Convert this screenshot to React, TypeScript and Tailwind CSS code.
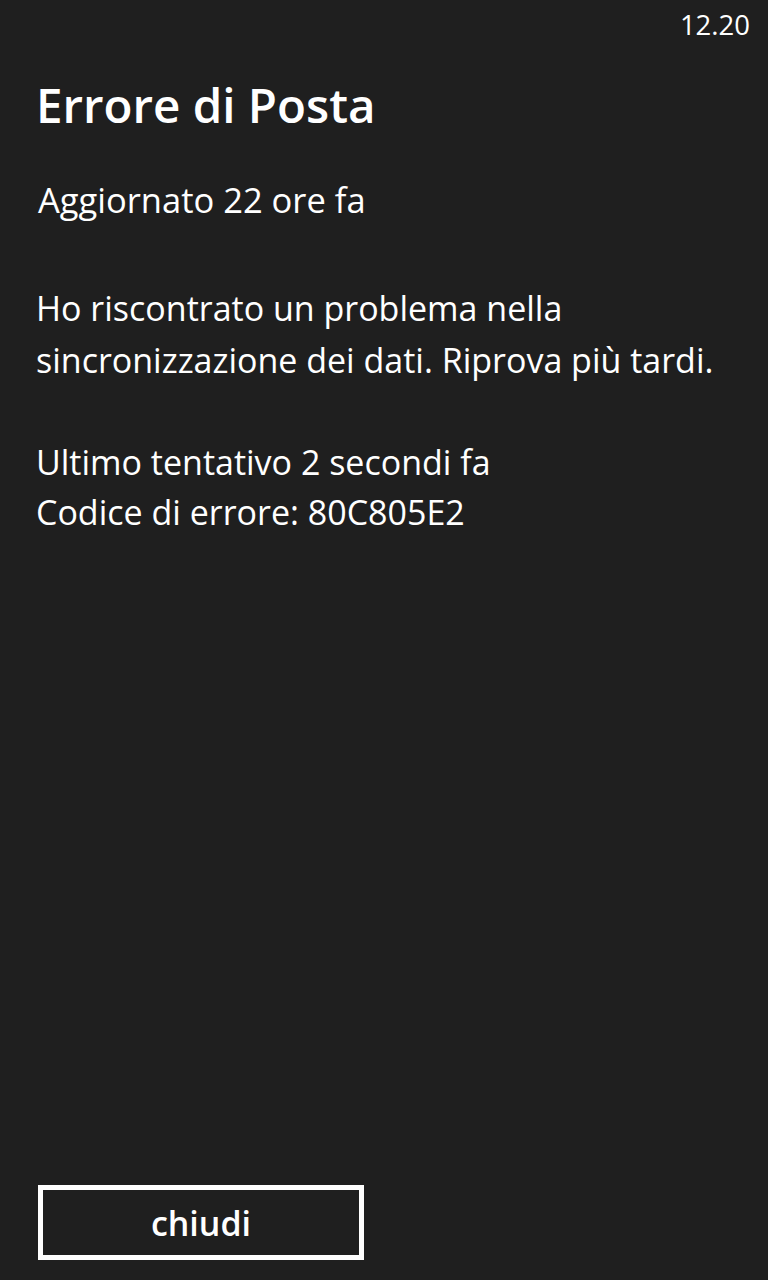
export default function App() {
  return (
    <div className="relative flex h-[1280px] w-[768px] flex-col bg-[#1f1f1f] text-white" style={{ fontFamily: '"Open Sans", "Noto Sans", sans-serif' }}>
      <div className="flex h-[50px] items-center justify-end pr-[18px]">
        <span className="text-[27.5px] leading-none">12.20</span>
      </div>
      <div className="flex flex-1 flex-col pl-[36px] pr-4">
        <h1 className="mt-[25px] text-[47.5px] font-semibold leading-[60px]">Errore di Posta</h1>
        <p className="mt-[40px] pl-[2px] text-[34.5px] leading-[50px]">Aggiornato 22 ore fa</p>
        <p className="mt-[57px] text-[34px] leading-[52px]">
          Ho riscontrato un problema nella
          <br />
          sincronizzazione dei dati. Riprova più tardi.
        </p>
        <p className="mt-[51px] text-[34px] leading-[50px]">
          Ultimo tentativo 2 secondi fa
          <br />
          Codice di errore: 80C805E2
        </p>
      </div>
      <div className="pb-[20px] pl-[38px]">
        <button className="flex h-[75px] w-[326px] items-center justify-center border-[5px] border-white text-[34px] font-semibold leading-none text-white">
          chiudi
        </button>
      </div>
    </div>
  );
}
